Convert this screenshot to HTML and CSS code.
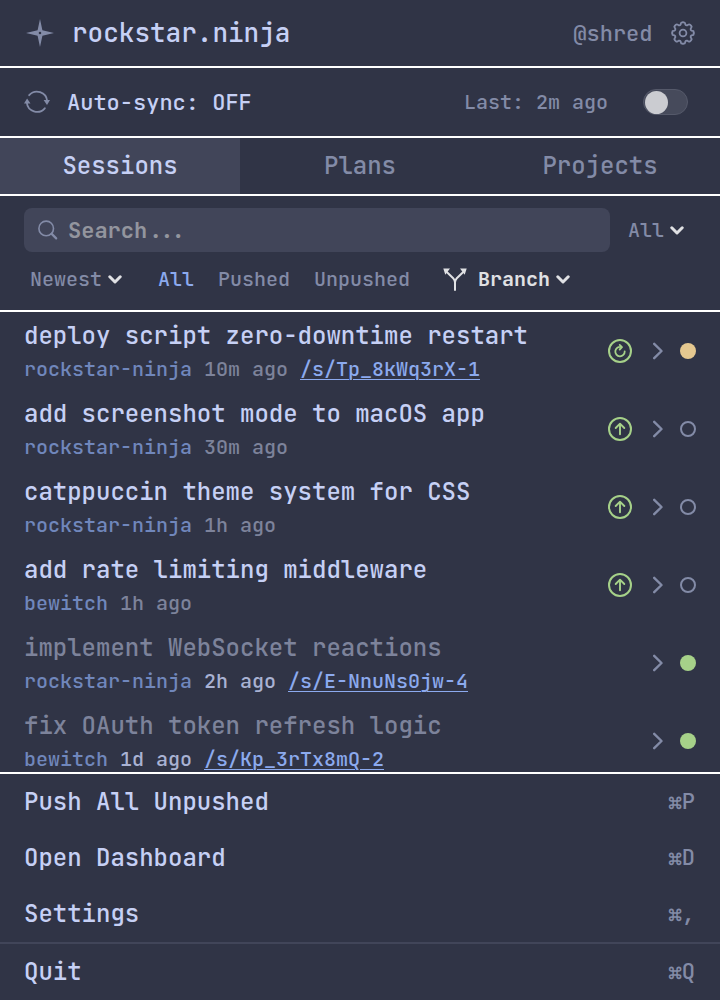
FILE: index.html
```html
<!DOCTYPE html>
<html lang="en">
  <head>
    <meta charset="utf-8" />
    <meta name="viewport" content="width=device-width, initial-scale=1.0" />
    <title>rockstar.ninja</title>
    <link rel="stylesheet" href="styles.css">
  </head>
  <body>
    <svg class="sprite" width="0" height="0">
      <symbol id="chev-down" viewBox="0 0 14 9">
        <path d="M1.8 1.8 7 7 12.2 1.8" fill="none" stroke="currentColor" stroke-width="3" stroke-linecap="round" stroke-linejoin="round" />
      </symbol>
      <symbol id="chev-right" viewBox="0 0 10 18">
        <path d="M1.2 1.8 8.5 9 1.2 16.2" fill="none" stroke="currentColor" stroke-width="2.4" stroke-linecap="round" stroke-linejoin="round" />
      </symbol>
      <symbol id="push" viewBox="0 0 24 24">
        <g fill="none" stroke="currentColor" stroke-linecap="round" stroke-linejoin="round">
          <circle cx="12" cy="12" r="11" stroke-width="2" />
          <path d="M12 17.2V7M7.7 11 12 6.7 16.3 11" stroke-width="1.9" />
        </g>
      </symbol>
      <symbol id="repush" viewBox="0 0 24 24">
        <g fill="none" stroke="currentColor" stroke-linecap="round" stroke-linejoin="round">
          <circle cx="12" cy="12" r="11" stroke-width="2" />
          <path d="M13 8A4.7 4.7 0 1 0 16.7 12.4M11.7 5.9 14 8.2 11.7 10.5" stroke-width="1.8" />
        </g>
      </symbol>
    </svg>

    <div class="popover">
      <header class="header">
        <svg class="logo" width="28" height="28" viewBox="0 0 28 28">
          <path fill="currentColor" fill-rule="evenodd" d="M14 0 16.4 11.2 28 14 16.4 16.8 14 28 11.6 16.8 0 14 11.6 11.2ZM14 12.7A1.3 1.3 0 1 0 14 15.3 1.3 1.3 0 1 0 14 12.7Z" />
        </svg>
        <h1 class="brand">rockstar.ninja</h1>
        <span class="user">@shred</span>
        <svg class="gear" width="24" height="24" viewBox="-12 -12 24 24" fill="none" stroke="currentColor" stroke-width="1.8" stroke-linecap="round" stroke-linejoin="round">
          <path id="cog" d="M0-10.7H.9Q1.9-10.7 2-9.9L2.35-8.5Q3-7.3 4.33-7.66L5.6-8.43Q6.31-8.99 7.01-8.29L8.29-7.01Q8.99-6.31 8.43-5.6L7.66-4.33Q7.3-3 8.5-2.35L9.9-2Q10.7-1.9 10.7-.9V0" />
          <use href="#cog" transform="rotate(90)" />
          <use href="#cog" transform="rotate(180)" />
          <use href="#cog" transform="rotate(270)" />
          <circle r="3.4" />
        </svg>
      </header>

      <section class="sync">
        <svg class="sync-icon" width="26" height="24" viewBox="0 0 26 24">
          <g fill="none" stroke="currentColor" stroke-width="1.8" stroke-linecap="round">
            <path d="M5.2 5.2A10.3 10.3 0 0 1 23.2 11" />
            <path d="M20.8 18.3A10.3 10.3 0 0 1 2.8 12.5" />
          </g>
          <path fill="currentColor" d="M19.6 10H26L23 15ZM0 13.5H6.5L3.1 8.4Z" />
        </svg>
        <span class="sync-label">Auto-sync: OFF</span>
        <span class="sync-last">Last: 2m ago</span>
        <span class="toggle"><span class="knob"></span></span>
      </section>

      <nav class="tabs">
        <a class="tab active">Sessions</a>
        <a class="tab">Plans</a>
        <a class="tab">Projects</a>
      </nav>

      <section class="filters">
        <div class="search-row">
          <div class="search">
            <svg width="20" height="20" viewBox="0 0 20 20" fill="none" stroke="currentColor" stroke-linecap="round">
              <circle cx="8.2" cy="8.4" r="7.3" stroke-width="1.6" />
              <path d="M13.7 13.9 18.2 18.4" stroke-width="2.2" />
            </svg>
            <span>Search...</span>
          </div>
          <span class="select">All<svg class="chev" width="14" height="9"><use href="#chev-down" /></svg></span>
        </div>
        <div class="filter-row">
          <span class="select sort">Newest<svg class="chev" width="14" height="9"><use href="#chev-down" /></svg></span>
          <span class="filter on">All</span>
          <span class="filter">Pushed</span>
          <span class="filter">Unpushed</span>
          <span class="select branch">
            <svg class="fork" width="24" height="23" viewBox="0 0 24 23">
              <path d="M12 22V14.5Q12 12 10.2 10.2L3.5 3.7M12 14.5Q12 12 13.8 10.2L20.5 3.7" fill="none" stroke="currentColor" stroke-width="2" stroke-linecap="round" />
              <path d="M.3.4H7L2.3 6.8ZM23.7.4H17L21.7 6.8Z" fill="currentColor" />
            </svg>
            Branch<svg class="chev" width="14" height="9"><use href="#chev-down" /></svg>
          </span>
        </div>
      </section>

      <main class="list">
        <div class="row">
          <div class="info">
            <div class="title">deploy script zero-downtime restart</div>
            <div class="meta"><span class="repo">rockstar-ninja</span> <span class="time">10m ago</span> <a class="link">/s/Tp_8kWq3rX-1</a></div>
          </div>
          <svg class="push" width="24" height="24"><use href="#repush" /></svg>
          <svg class="open" width="10" height="18"><use href="#chev-right" /></svg>
          <span class="dot yellow"></span>
        </div>
        <div class="row">
          <div class="info">
            <div class="title">add screenshot mode to macOS app</div>
            <div class="meta"><span class="repo">rockstar-ninja</span> <span class="time">30m ago</span></div>
          </div>
          <svg class="push" width="24" height="24"><use href="#push" /></svg>
          <svg class="open" width="10" height="18"><use href="#chev-right" /></svg>
          <span class="dot"></span>
        </div>
        <div class="row">
          <div class="info">
            <div class="title">catppuccin theme system for CSS</div>
            <div class="meta"><span class="repo">rockstar-ninja</span> <span class="time">1h ago</span></div>
          </div>
          <svg class="push" width="24" height="24"><use href="#push" /></svg>
          <svg class="open" width="10" height="18"><use href="#chev-right" /></svg>
          <span class="dot"></span>
        </div>
        <div class="row">
          <div class="info">
            <div class="title">add rate limiting middleware</div>
            <div class="meta"><span class="repo">bewitch</span> <span class="time">1h ago</span></div>
          </div>
          <svg class="push" width="24" height="24"><use href="#push" /></svg>
          <svg class="open" width="10" height="18"><use href="#chev-right" /></svg>
          <span class="dot"></span>
        </div>
        <div class="row pushed">
          <div class="info">
            <div class="title">implement WebSocket reactions</div>
            <div class="meta"><span class="repo">rockstar-ninja</span> <span class="time">2h ago</span> <a class="link">/s/E-NnuNs0jw-4</a></div>
          </div>
          <svg class="open" width="10" height="18"><use href="#chev-right" /></svg>
          <span class="dot green"></span>
        </div>
        <div class="row pushed">
          <div class="info">
            <div class="title">fix OAuth token refresh logic</div>
            <div class="meta"><span class="repo">bewitch</span> <span class="time">1d ago</span> <a class="link">/s/Kp_3rTx8mQ-2</a></div>
          </div>
          <svg class="open" width="10" height="18"><use href="#chev-right" /></svg>
          <span class="dot green"></span>
        </div>
      </main>

      <footer class="menu">
        <div class="item">Push All Unpushed<span class="key">⌘P</span></div>
        <div class="item">Open Dashboard<span class="key">⌘D</span></div>
        <div class="item">Settings<span class="key">⌘,</span></div>
        <div class="item quit">Quit<span class="key">⌘Q</span></div>
      </footer>
    </div>
  </body>
</html>
```

FILE: styles.css
```css
* {
  box-sizing: border-box;
}

body {
  margin: 0;
  background: #303446;
  color: #c6d0f5;
  font-family: "JetBrains Mono", "DejaVu Sans Mono", monospace;
  font-size: 24px;
  font-weight: 500;
  white-space: nowrap;
}

svg {
  display: block;
  flex: none;
}

.sprite {
  position: absolute;
}

.popover {
  display: flex;
  flex-direction: column;
  width: 720px;
  height: 1000px;
  overflow: hidden;
}

.header {
  display: flex;
  align-items: center;
  height: 68px;
  padding: 0 25.5px 0 26px;
  border-bottom: 2px solid #fff;
  color: #838ba7;
}

.brand {
  margin: 0 auto 0 18px;
  padding-bottom: 2px;
  color: #c6d0f5;
  font-size: 26px;
  font-weight: 500;
}

.user {
  margin-right: 18px;
  font-size: 22px;
}

.sync {
  display: flex;
  align-items: center;
  height: 70px;
  padding: 0 32.5px 0 24px;
  border-bottom: 2px solid #fff;
  color: #838ba7;
}

.sync-label {
  margin: 0 auto 0 17px;
  color: #c6d0f5;
  font-size: 22px;
}

.sync-last {
  margin-right: 34.5px;
  font-size: 20px;
}

.toggle {
  width: 45px;
  height: 26px;
  padding: 1px;
  border: 1px solid #55596a;
  border-radius: 13px;
  background: #464a5b;
}

.knob {
  display: block;
  width: 23px;
  height: 23px;
  margin-top: -0.5px;
  border-radius: 50%;
  background: #cbccd1;
}

.tabs {
  display: flex;
  height: 58px;
  border-bottom: 2px solid #fff;
}

.tab {
  flex: 1;
  color: #838ba7;
  line-height: 56px;
  text-align: center;
}

.tab.active {
  background: #414559;
  color: #c6d0f5;
}

.filters {
  height: 116px;
  padding: 12px 24px 0;
  border-bottom: 2px solid #fff;
  color: #838ba7;
  font-size: 20px;
}

.search-row,
.filter-row,
.search,
.select {
  display: flex;
  align-items: center;
}

.search {
  width: 586px;
  height: 44px;
  margin-right: 18px;
  padding-left: 14px;
  gap: 10px;
  border-radius: 8px;
  background: #414559;
  font-size: 22px;
}

.search span {
  color: #93959e;
  font-weight: 600;
}

.chev {
  margin-left: 6px;
  color: #e0e1e4;
}

.filter-row {
  height: 54px;
  padding-left: 6px;
  gap: 24px;
}

.sort {
  margin-right: 12px;
}

.on {
  color: #8caaee;
}

.branch {
  margin-left: 9px;
  color: #e0e1e4;
  font-weight: 600;
}

.fork {
  margin-right: 11px;
}

.list {
  height: 460px;
  overflow: hidden;
}

.row {
  display: flex;
  align-items: center;
  height: 78px;
  padding: 0 24px;
}

.info {
  flex: 1;
  height: 62px;
}

.title {
  line-height: 32px;
}

.meta {
  margin-top: 4px;
  font-size: 20px;
  line-height: 26px;
}

.repo {
  color: #7087bc;
}

.time {
  color: #7d839b;
}

.link {
  color: #8caaee;
  text-decoration: underline;
  text-decoration-thickness: 1px;
  text-underline-offset: 3px;
}

.pushed .title {
  color: #7d839b;
}

.pushed .time {
  color: #a9b2d3;
}

.push {
  color: #a6d189;
}

.open {
  margin: 0 17.5px 0 20.5px;
  color: #838ba7;
}

.dot {
  width: 16px;
  height: 16px;
  border: 2px solid #838ba7;
  border-radius: 50%;
}

.dot.yellow {
  border: none;
  background: #e5c890;
}

.dot.green {
  border: none;
  background: #a6d189;
}

.menu {
  height: 228px;
  border-top: 2px solid #fff;
}

.item {
  display: flex;
  align-items: center;
  justify-content: space-between;
  height: 56px;
  padding: 0 25px 2px 24px;
}

.quit {
  height: 58px;
  border-top: 2px solid #414559;
}

.key {
  color: #838ba7;
  font-size: 22px;
}
```
